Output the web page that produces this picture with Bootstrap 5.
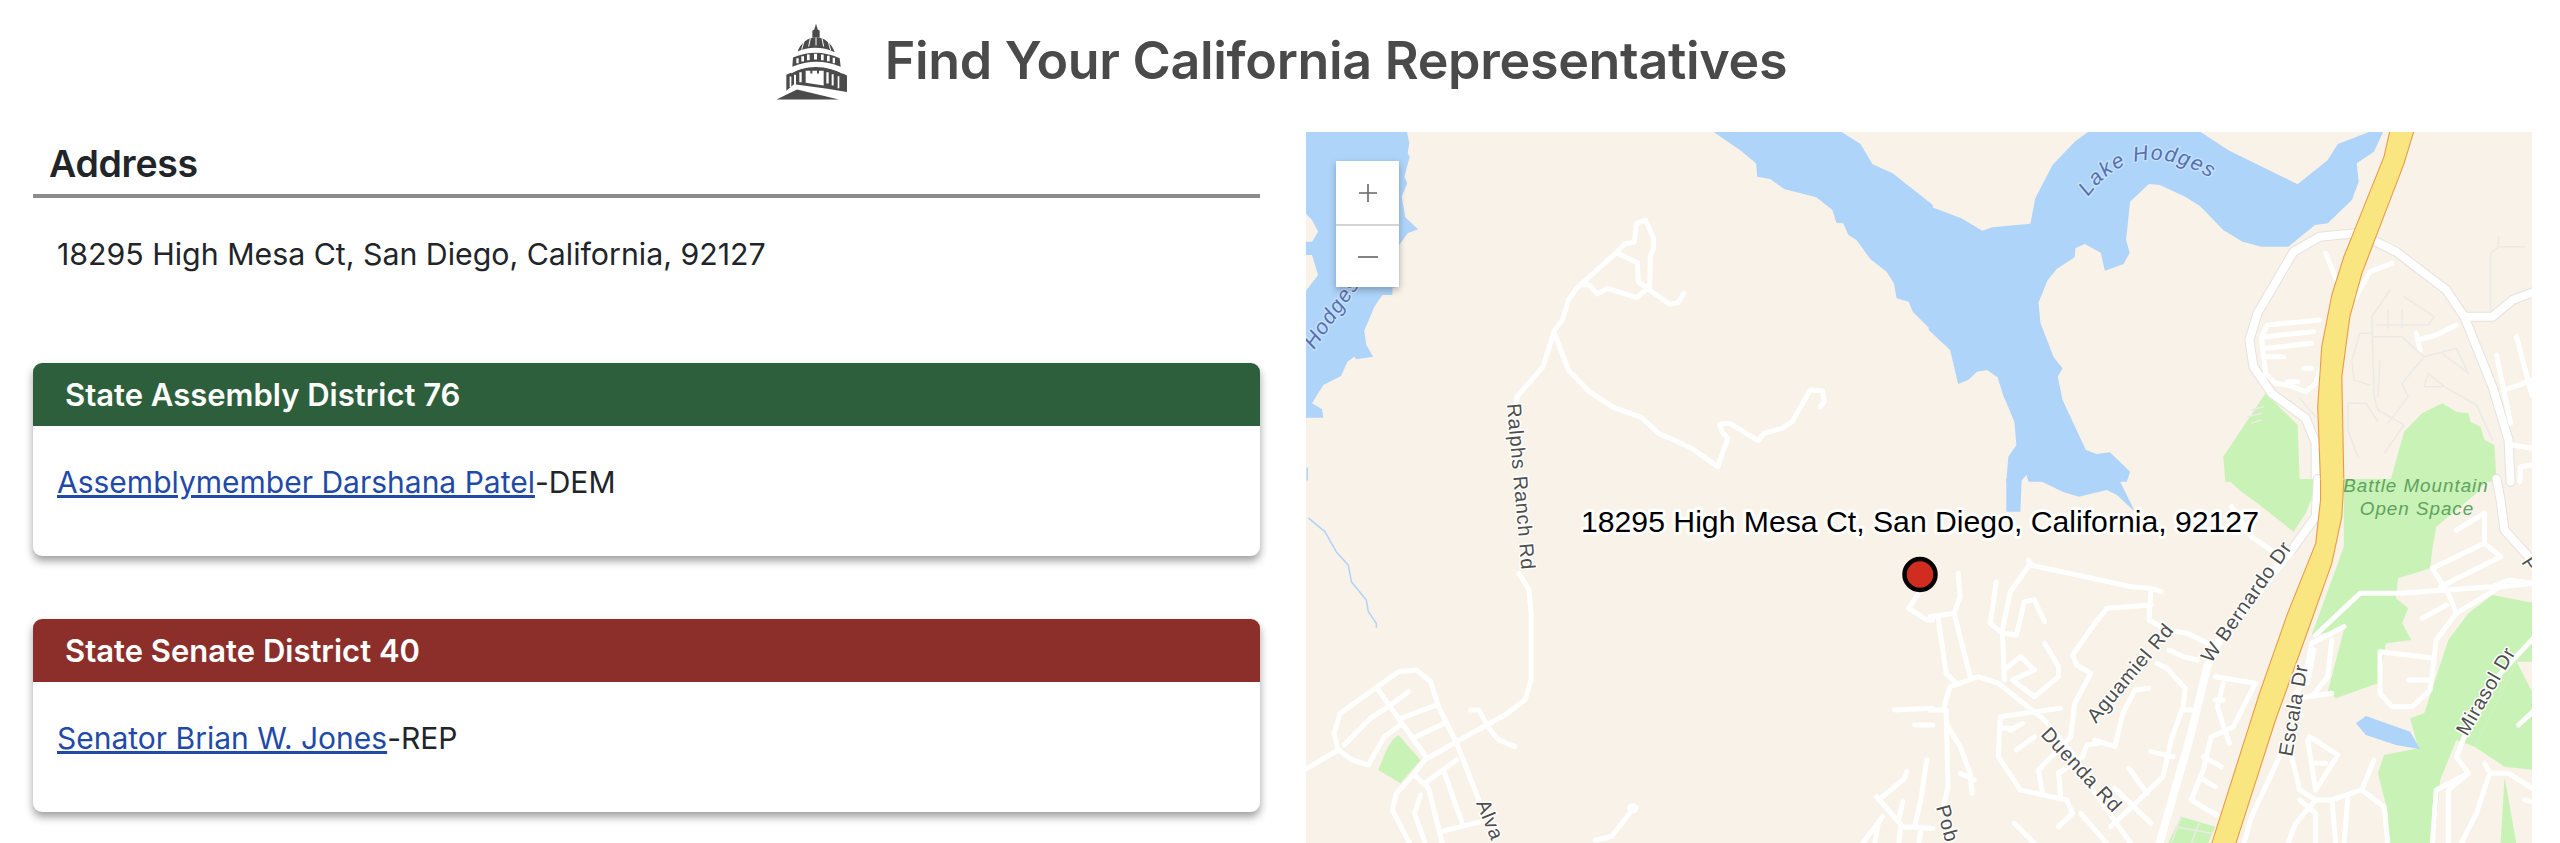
<!DOCTYPE html>
<html lang="en">
<head>
    <meta charset="utf-8">
    <title>Find Your California Representatives</title>
    <link href="https://cdn.jsdelivr.net/npm/bootstrap@5.3.0/dist/css/bootstrap.min.css" rel="stylesheet">
    <style>
        html, body { height: 843px; overflow: hidden; }
        body { font-family: Inter, "Liberation Sans", sans-serif; color: #212529; background: #fff; }
        .page-top { height: 132px; gap: 38px; padding: 0 0 10px 4px; }
        .page-top h1 { font-size: 52px; font-weight: 600; color: #4a4a4a; margin: 0; letter-spacing: -.3px; }
        .left-col { width: 1280px; padding: 0 20px 0 33px; flex: none; }
        .right-col { width: 1280px; padding: 0 28px 0 26px; flex: none; }
        .addr-head { font-size: 37.5px; font-weight: 600; line-height: 50px; padding: 7px 0 5px 16px; margin: 0; border-bottom: 4px solid #8c8c8c; letter-spacing: -.3px; }
        .addr-line { font-size: 30.3px; line-height: 40px; padding: 36px 0 0 24px; margin: 0 0 89px; }
        .rep-card { border: 0; border-radius: 9px; margin-bottom: 63px; box-shadow: 0 5px 9px rgba(0,0,0,.38); }
        .rep-head { height: 63px; padding: 0 0 0 32px; font-size: 31px; font-weight: 600; line-height: 63px; color: #fff; border: 0; }
        .rep-head:first-child { border-radius: 9px 9px 0 0; }
        .head-dem { background: #2d5f3c; }
        .head-rep { background: #8c2f2b; }
        .rep-body { height: 130px; padding: 36px 0 0 24px; font-size: 30px; line-height: 40px; }
        .rep-body a { color: #1f4aa8; }
        .map-box { width: 1226px; height: 711px; overflow: hidden; background: #f8f2e8; }
        .map-box svg { display: block; }
        .zoom-box { top: 29px; left: 30px; width: 63px; background: #fff; box-shadow: 0 3px 7px rgba(0,0,0,.28); }
        .zoom-btn { display: block; width: 63px; height: 63px; padding: 0; border: 0; border-radius: 0; background: #fff; }
        .zoom-btn + .zoom-btn { border-top: 2px solid #d4d4d4; }
        .zoom-btn svg { margin: auto; }
        .wat { fill: #aed4fa; }
        .grn { fill: #c9f2b7; }
        .lnd { fill: #f8f2e8; }
        .yel { fill: #f9e680; }
        .rd, .rk, .rc, .hw, .ft, .st { fill: none; stroke-linecap: round; stroke-linejoin: round; vector-effect: non-scaling-stroke; }
        .rd { stroke: #fff; stroke-width: 5; }
        .rk { stroke: #fff; stroke-width: 8; }
        .rc { stroke: #e5e3df; stroke-width: 10; }
        .hw { stroke: #ea9a48; stroke-width: 1.1; }
        .ft { stroke: #eceae6; stroke-width: 1.5; }
        .st { stroke: #aed4fa; stroke-width: 1.5; }
        .mlab { font-family: "Liberation Sans", sans-serif; paint-order: stroke; stroke: #fff; stroke-linejoin: round; }
        .lab-rd { font-size: 20px; fill: #4d4d4d; stroke-width: 3px; letter-spacing: .7px; }
        .lab-wat { font-size: 21px; font-style: italic; fill: #5570ae; stroke: #c6e0fb; stroke-width: 3px; letter-spacing: 1.5px; }
        .lab-prk { font-size: 18.8px; font-style: italic; fill: #5ea35e; stroke: none; letter-spacing: 1px; text-anchor: middle; }
        .lab-pin { font-size: 30.2px; fill: #000; stroke-width: 6px; }
    </style>
</head>
<body>
    <div class="page-top d-flex align-items-center justify-content-center">
        <svg width="70" height="77" viewBox="30 25 210 230" aria-hidden="true">
            <g fill="#4b4b4b">
                <path d="M147 26l5 18 6 4v20h-22V48l6-4z"/>
                <path d="M92 110c8-25 32-43 55-43s48 18 56 45c-33-16-78-18-111-2z"/>
                <path d="M78 128q70-30 140 2l3 26q-73-30-145 0z"/>
                <path d="M58 180q90-48 182 2l1 50-60-10-100-14-23 20z"/>
                <path d="M28 254l62-30 126 30z"/>
            </g>
            <g stroke="#fff" stroke-width="3" fill="none">
                <path d="M112 76l-8 28M130 70l-5 25M147 68v24M165 70l5 25M183 78l8 28"/>
                <path d="M72 172q76-44 156 2" stroke-width="7"/>
            </g>
            <g fill="#fff">
                <path d="M88 130h7v15h-7zM103 124h8v16h-8zM120 119h8v17h-8zM141 117h9v17h-9zM162 119h8v17h-8zM180 123h8v16h-8zM197 129h7v16h-7z"/>
                <path d="M68 185h5v32h-5zM81 180h6v30h-6zM97 172h7v30h-7zM178 172h7v34h-7zM194 178h6v34h-6zM212 184h5v36h-5z"/>
                <path d="M116 168h14v8h6v-8h14v8h6v-8h14v44l-54-8z"/>
            </g>
        </svg>
        <h1>Find Your California Representatives</h1>
    </div>

    <div class="d-flex">
        <div class="left-col">
            <h2 class="addr-head">Address</h2>
            <p class="addr-line">18295 High Mesa Ct, San Diego, California, 92127</p>

            <div class="card rep-card">
                <div class="card-header rep-head head-dem">State Assembly District 76</div>
                <div class="card-body rep-body"><a href="#">Assemblymember Darshana Patel</a>-DEM</div>
            </div>
            <div class="card rep-card">
                <div class="card-header rep-head head-rep">State Senate District 40</div>
                <div class="card-body rep-body"><a href="#">Senator Brian W. Jones</a>-REP</div>
            </div>
        </div>

        <div class="right-col">
            <div class="map-box position-relative">
                <svg width="1226" height="711" viewBox="1306 132 1226 711">
                    <!-- top left quarter -->
                    <g transform="translate(1300 120) scale(.40179 .33333)">
                        <path class="wat" d="M10 30H265L272 70 268 100 273 110 260 170 267 190 253 230 262 292 294 328 268 340 247 375V500L230 503V525H205L185 560 160 632 165 675 182 710 140 718 135 710 118 725 102 768 58 795 30 850 55 868 58 893H10Z"/>
                        <path class="lnd" d="M10 275L30 300 45 335 30 365H10ZM10 405H30L45 465 10 520Z"/>
                        <path class="wat" d="M1022 30H1340L1395 72 1425 133 1475 160 1575 255V635L1525 575 1515 545 1485 535 1478 490 1460 455 1420 418 1385 360 1365 345 1352 310 1335 308 1325 270 1285 232 1205 207 1170 177 1138 170 1135 130 1095 90Z"/>
                        <path class="rd" d="M1040 1040L975 985 890 938 850 892 780 862 720 815 668 750 632 635 655 595 668 540 688 505 790 395 808 372 832 366 838 310 860 300 880 355V385L872 405 870 510 920 553 940 548 955 520"/>
                        <path class="rd" d="M790 400L840 428 842 485 865 505 838 533 765 505 740 522 720 495H705"/>
                        <path class="rd" d="M632 635L605 740 540 830 537 870"/>
                        <path class="rd" d="M1040 1040L1065 955 1050 935 1045 912 1070 910 1140 962 1155 940 1200 925 1225 905 1270 810 1300 812 1305 845 1295 860"/>
                        <path class="st" d="M18 1045V1080"/>
                    </g>
                    <!-- top right quarter -->
                    <g transform="translate(1930 120) scale(.40179 .33333)">
                        <path class="wat" d="M-3 258L78 295 130 332 155 322 250 311 262 235 305 135 360 65 400 30H672V35L745 92 915 193 990 120 1015 72 1095 35V30H1130L1105 95 1062 130 1067 185 1050 240 990 310 958 315 892 380H825L778 365 730 330 672 258 635 230 572 195 545 192 498 245 488 360 497 398 482 432 435 452 425 398 385 372 362 385 360 412 315 447 292 482 270 548 275 610 308 712 330 745 318 770 330 840 388 990 415 1002 448 997 498 1055 490 1085H245L240 1065 225 1085H190L195 1010 215 975 210 905 182 825 168 772 142 750 117 755 95 780 70 792 50 690-3 630Z"/>
                        <path class="grn" d="M835 820L730 1010 735 1085H920L915 915Z"/>
                        <path class="grn" d="M1275 850L1225 880 1180 935 1145 1085H1410L1405 975 1380 960 1370 920 1345 905 1340 880 1310 875Z"/>
                        <path class="rc" d="M1060 340L970 350 905 395 815 580 795 660 805 740 850 820 935 895 960 970V1085"/>
                        <path class="rc" d="M1110 365L1160 395 1285 510 1330 590 1400 800 1440 960 1445 1085"/>
                        <path class="rc" d="M1330 590H1400L1450 540 1505 515"/>
                        <path class="rk" d="M1060 340L970 350 905 395 815 580 795 660 805 740 850 820 935 895 960 970V1085"/>
                        <path class="rk" d="M1110 365L1160 395 1285 510 1330 590 1400 800 1440 960 1445 1085"/>
                        <path class="rk" d="M1330 590H1400L1450 540 1505 515"/>
                        <path class="rd" d="M985 400L1015 490M1150 430L1095 455 1060 530"/>
                        <path class="rd" d="M970 600L840 615 825 650 835 760 860 790 890 795 935 815 960 790 970 750"/>
                        <path class="rd" d="M835 650L955 635M835 685L950 670M840 710H880M890 785H915M930 745H950"/>
                        <path class="rd" d="M1210 640L1220 690M1215 660L1260 645 1310 615"/>
                        <path class="rd" d="M1460 650L1498 825M1410 705L1445 910M1430 810L1500 780"/>
                        <path class="rd" d="M1450 975L1500 985M1468 1085L1470 1040 1500 1035"/>
                        <path class="ft" d="M1145 510L1100 590 1105 830 1115 870 1180 915 1130 1000M1180 530L1255 590 1240 615H1110M1140 570V625M1175 570V625M1105 650H1175L1210 690 1230 710 1310 685 1340 760 1275 700M1230 710L1175 790 1190 830 1140 910M1050 720L1070 640H1100M1050 720L1055 780 1095 795M1040 850H1085L1115 905M1040 850V930L1065 1010M1275 800L1230 800 1240 760 1280 800 1360 855 1400 960M1120 720L1115 830"/>
                        <path class="ft" d="M1415 350V380H1480M1415 380L1395 400V570M920 835L960 890M800 870L830 860M790 890L825 880M800 910L825 900"/>
                    </g>
                    <!-- bottom left quarter -->
                    <g transform="translate(1300 480) scale(.40179 .33333)">
                        <path class="st" d="M22 115L62 155 90 215 120 255 128 305 165 360 170 395 190 430V442"/>
                        <path class="grn" d="M245 765L300 840 250 910 195 870 215 810 230 780Z"/>
                        <path class="rd" d="M545 280L570 330 575 400V600L560 660 510 705 390 785 310 840 285 880 240 940 230 990 260 1060 275 1095"/>
                        <path class="rd" d="M10 870L95 810 85 760 100 700 245 575 290 570 325 605 345 680 390 790 445 960"/>
                        <path class="rd" d="M195 630L310 825M220 680L270 635M250 715L340 675M280 775L360 730M95 810L130 840 170 855 210 770 250 735M110 795L175 715 220 680"/>
                        <path class="rd" d="M390 840L310 910M285 885L320 925 355 1095M360 880L405 1035M350 1055L450 1025M300 945L285 1000 310 1085"/>
                        <path class="rd" d="M425 690H445L470 745 495 780 535 800"/>
                        <path class="rd" d="M735 1080L775 1070 830 985"/>
                        <circle class="rd" cx="828" cy="985" r="8"/>
                        <path class="rd" d="M1480 690L1575 685M1530 735H1575M1540 340L1515 385 1560 420H1575"/>
                        <path class="rd" d="M1510 875L1505 895 1440 960M1435 950L1500 1040 1575 1045M1560 840L1545 960 1530 1040M1500 965L1490 1020M1450 1010L1400 1090M1440 1025L1430 1095M1495 1040L1490 1095M1545 1045L1540 1095"/>
                    </g>
                    <!-- bottom right quarter -->
                    <g transform="translate(1930 480) scale(.40179 .33333)">
                        <path class="wat" d="M190-3V95H225L228-3ZM265-3L330 35 370 50 440 30 465 45 510 95 470-3Z"/>
                        <path class="grn" d="M740-3L775 35 815 70 905 155 935 100 970-3Z"/>
                        <path class="grn" d="M1030-3H1390L1360 40 1260 140 1250 210 1245 265 1165 295 1160 355 1190 385 1175 430 1198 480 1135 490 1115 610 1010 655 990 635 1030 450 950 465 1030 200Z"/>
                        <path class="grn" d="M1505 370L1400 345 1340 400 1290 480 1230 700 1195 715 1215 805 1130 825 1115 880 1140 1000V1095H1255L1270 900 1310 780 1355 800 1460 545H1505Z"/>
                        <path class="grn" d="M1355 800L1430 860 1505 870V650L1460 545ZM1430 890L1420 1095H1460Z"/>
                        <path class="wat" d="M1060 730L1085 708 1195 755 1220 808 1160 795 1085 765Z"/>
                        <path class="grn" d="M590 1095L625 1010 710 1040 690 1095Z"/>
                        <path class="ft" d="M610 1040L700 1060M625 1010L600 1090M670 1030L650 1090"/>
                        <path class="rc" d="M965-3L960 110 900 210"/>
                        <path class="rc" d="M1410-3L1420 60 1430 150 1505 250"/>
                        <path class="rk" d="M965-3L960 110 900 210"/>
                        <path class="rk" d="M1410-3L1420 60 1430 150 1505 250"/>
                        <path class="rk" d="M900 210L720 480 690 560 650 760 570 1095"/>
                        <path class="rd" d="M750 80L800 170 860 220"/>
                        <path class="rd" d="M245 240L250 255 500 320 550 325 575 335M250 250L200 335 180 450 185 600M550 330L545 420 590 450 640 460 690 490M550 375L440 385 410 430 355 525 365 555 400 580"/>
                        <path class="rd" d="M165 305L150 430 180 460 215 465 235 365 260 360 285 425M70 280L75 350 60 400 100 590M0 410L60 400M20 410L40 580 65 610M285 490L320 560 320 590 260 650 205 600 260 570 225 530 185 570M35 680L50 620 120 590 170 610 285 720 355 820 400 920 470 1040 500 1090"/>
                        <path class="rd" d="M325 685L175 710 170 830 225 930 340 960 355 1000 320 1040M210 745L180 745M230 730L200 750M260 770L215 810M0 690H40L45 920 30 1000M45 740L75 800 100 880 105 940M75 880L110 900"/>
                        <path class="rd" d="M400 580L360 670 350 770 270 870 280 940M320 875L325 950M420 790L390 795 380 830 320 880M410 780L460 800 480 700 510 630 545 625M595 510L630 530 665 540M565 550L590 565 635 625 630 680 600 780 580 890 520 960 450 1040M630 690H650M550 815L605 830M495 865L540 940M460 925L550 1030M375 1000L440 1090M210 1030L260 1090"/>
                        <path class="rd" d="M710 590L810 610 755 740 700 770 680 870 650 960 720 1010M730 610L715 680 745 790M680 830L725 860M675 895L710 920M710 660H730"/>
                        <path class="rd" d="M870 830L800 1010 780 1095M900 830L920 930 960 960 1000 960 1075 930 1105 840M945 770L1015 825 960 930 940 780M1000 960L1010 1095M1040 950L1030 1095M1075 930L1130 980 1140 1095M960 960L910 1030 890 1095M920 960L960 1000 960 1095M960 850H985"/>
                        <path class="rd" d="M1030 440L950 490 930 610 910 640M955 510L940 610M1000 480L990 590 950 650M915 655L1000 640M915 695L925 705"/>
                        <path class="rd" d="M960 465L1070 340 1170 340 1400 320 1440 300 1505 310M1250 265L1290 340 1310 400M1380 190L1250 265M1420 230L1270 320M1310 150L1380 100V190L1420 230M1225 415L1285 375"/>
                        <path class="rd" d="M1505 310L1420 320 1310 400 1260 480 1245 630 1200 680H1150L1120 640V515L1255 535M1190 600H1240"/>
                        <path class="rd" d="M1505 470L1420 580 1330 770 1310 830 1340 880 1260 930 1250 1095M1380 850L1395 880 1440 880 1505 930M1340 880L1290 930 1290 1095M1390 890L1360 1000 1320 1095M1465 735L1505 690M1480 960L1500 965"/>
                    </g>
                    <!-- motorway, over the two right quarters -->
                    <g transform="translate(1930 120) scale(.40179 .33333)">
                        <path class="yel" d="M1145 30L1130 110 1060 320 1030 410 1000 525 975 680 965 860 972 1085H1030L1025 770 1045 590 1075 460 1110 350 1180 130 1205 30Z"/>
                        <path class="hw" d="M1145 30L1130 110 1060 320 1030 410 1000 525 975 680 965 860 972 1085M1205 30L1180 130 1110 350 1075 460 1045 590 1025 770 1030 1085"/>
                    </g>
                    <g transform="translate(1930 480) scale(.40179 .33333)">
                        <path class="yel" d="M972-5L972 60 960 190 890 400 820 640 700 1095H760L860 720 950 420 1000 250 1025 110 1030-5Z"/>
                        <path class="hw" d="M972 0V60L960 190 890 400 820 640 700 1095M1030 0L1025 110 1000 250 950 420 860 720 760 1095"/>
                    </g>

                    <path id="lake-line" d="M2088 197Q2140 125 2232 192" fill="none"/>
                    <text class="mlab lab-wat"><textPath href="#lake-line">Lake Hodges</textPath></text>
                    <text class="mlab lab-wat" transform="translate(1314 350) rotate(-55)">Hodges</text>
                    <text class="mlab lab-rd" transform="translate(1507 404) rotate(85)">Ralphs Ranch Rd</text>
                    <text class="mlab lab-rd" transform="translate(1476 803) rotate(68)">Alva</text>
                    <text class="mlab lab-rd" transform="translate(1936 807) rotate(75)">Pob</text>
                    <text class="mlab lab-rd" transform="translate(2040 735) rotate(47)">Duenda Rd</text>
                    <text class="mlab lab-rd" transform="translate(2096 724) rotate(-50)">Aguamiel Rd</text>
                    <text class="mlab lab-rd" transform="translate(2211 664) rotate(-55)">W Bernardo Dr</text>
                    <text class="mlab lab-rd" transform="translate(2292 757) rotate(-80)">Escala Dr</text>
                    <text class="mlab lab-rd" transform="translate(2467 737) rotate(-60)">Mirasol Dr</text>
                    <text class="mlab lab-rd" transform="translate(2521 562) rotate(58)">P</text>
                    <text class="mlab lab-prk" x="2416" y="492">Battle Mountain</text>
                    <text class="mlab lab-prk" x="2417" y="515">Open Space</text>

                    <text class="mlab lab-pin" x="1581" y="532">18295 High Mesa Ct, San Diego, California, 92127</text>
                    <circle cx="1920" cy="574.5" r="15.5" fill="#d02c1f" stroke="#000" stroke-width="4.5"/>
                </svg>
                <div class="zoom-box position-absolute">
                    <button type="button" class="btn zoom-btn" aria-label="Zoom in">
                        <svg class="d-block" width="20" height="20" viewBox="0 0 20 20"><path d="M10 1v18M1 10h18" stroke="#666" stroke-width="1.6" fill="none"/></svg>
                    </button>
                    <button type="button" class="btn zoom-btn" aria-label="Zoom out">
                        <svg class="d-block" width="20" height="20" viewBox="0 0 20 20"><path d="M0 10h20" stroke="#666" stroke-width="1.6" fill="none"/></svg>
                    </button>
                </div>
            </div>
        </div>
    </div>

    <script src="https://cdn.jsdelivr.net/npm/bootstrap@5.3.0/dist/js/bootstrap.bundle.min.js"></script>
</body>
</html>
